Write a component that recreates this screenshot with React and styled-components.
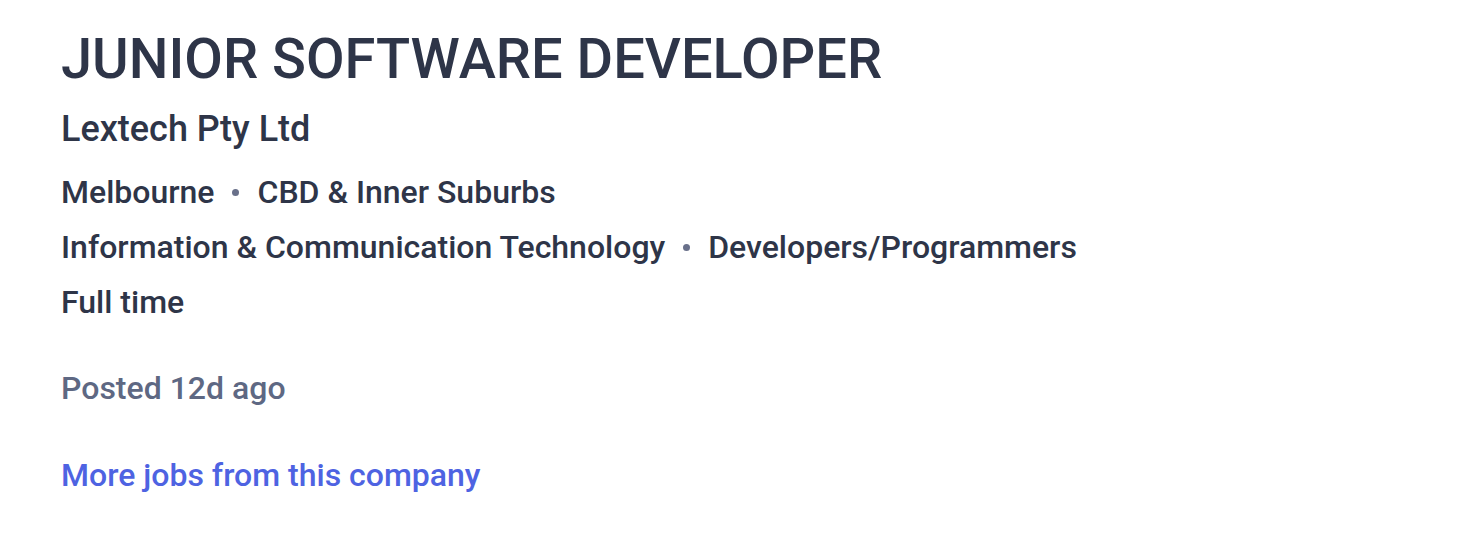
import React from "react";
import styled, { createGlobalStyle } from "styled-components";

const GlobalStyle = createGlobalStyle`
  body {
    margin: 0;
    background: #fff;
    font-family: Roboto, "Liberation Sans", sans-serif;
  }
`;

const Wrapper = styled.div`
  display: flex;
  flex-direction: column;
  align-items: flex-start;
  padding: 27px 61px;
  color: #2e3548;
`;

const Title = styled.h1`
  margin: 0;
  font-size: 56px;
  line-height: 64px;
  font-weight: 500;
`;

const Company = styled.h2`
  margin: 16px 0 0;
  font-size: 36px;
  line-height: 44px;
  font-weight: 500;
`;

const MetaList = styled.div`
  display: flex;
  flex-direction: column;
  gap: 15px;
  margin-top: 21px;
`;

const MetaRow = styled.div`
  display: flex;
  align-items: center;
  font-size: 32px;
  line-height: 40px;
  font-weight: 500;
`;

const Dot = styled.span`
  width: 7px;
  height: 7px;
  border-radius: 50%;
  background: #69708a;
  margin: 0 18px;
`;

const Posted = styled.div`
  margin-top: 46px;
  font-size: 32px;
  line-height: 40px;
  font-weight: 500;
  color: #5e6883;
`;

const MoreLink = styled.a`
  margin-top: 47px;
  font-size: 32px;
  line-height: 40px;
  font-weight: 500;
  color: #4e63e2;
  text-decoration: none;
  cursor: pointer;
`;

const Meta = ({ items }) => (
  <MetaRow>
    {items.map((item, i) => (
      <React.Fragment key={item}>
        {i > 0 && <Dot />}
        <span>{item}</span>
      </React.Fragment>
    ))}
  </MetaRow>
);

const App = () => (
  <>
    <GlobalStyle />
    <Wrapper>
      <Title>JUNIOR SOFTWARE DEVELOPER</Title>
      <Company>Lextech Pty Ltd</Company>
      <MetaList>
        <Meta items={["Melbourne", "CBD & Inner Suburbs"]} />
        <Meta
          items={["Information & Communication Technology", "Developers/Programmers"]}
        />
        <Meta items={["Full time"]} />
      </MetaList>
      <Posted>Posted 12d ago</Posted>
      <MoreLink>More jobs from this company</MoreLink>
    </Wrapper>
  </>
);

export default App;
